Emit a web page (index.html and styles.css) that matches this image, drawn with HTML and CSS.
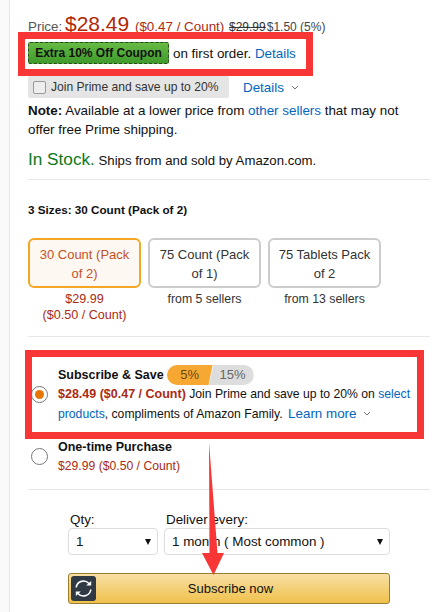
FILE: index.html
```html
<!DOCTYPE html>
<html lang="en">
<head>
    <meta charset="UTF-8">
    <meta name="viewport" content="width=device-width, initial-scale=1.0">
    <link rel="stylesheet" href="styles.css">
    <title>Subscribe &amp; Save</title>
</head>
<body>

    <div class="panel">
        <div class="price-block">
            <div class="price-row">
                <span class="muted">Price:</span>
                <span class="price-big">$28.49</span>
                <span class="red">($0.47 / Count)</span>
                <span class="strike">$29.99</span><span class="saving">$1.50 (5%)</span>
            </div>
            <div class="coupon-row">
                <span class="coupon">Extra 10% Off Coupon</span>
                <span>on first order. <a class="link">Details</a></span>
            </div>
            <div class="prime-row">
                <div class="prime-box">
                    <span class="checkbox"></span>
                    <span>Join Prime and save up to 20%</span>
                </div>
                <a class="link prime-details">Details</a>
                <svg class="chevron" width="8" height="5" viewBox="0 0 8 5"><path d="M1 1l3 3 3-3" fill="none" stroke="#777" stroke-width="1"/></svg>
            </div>
            <p class="note"><b>Note:</b> Available at a lower price from <a class="link">other sellers</a> that may not offer free Prime shipping.</p>
            <div class="stock-row"><span class="in-stock">In Stock.</span> Ships from and sold by Amazon.com.</div>
        </div>

        <div class="sizes-block">
            <div class="sizes-label">3 Sizes: 30 Count (Pack of 2)</div>
            <div class="sizes">
                <div class="size">
                    <div class="size-btn selected">30 Count (Pack of 2)</div>
                    <div class="size-note red">$29.99<br>($0.50 / Count)</div>
                </div>
                <div class="size">
                    <div class="size-btn">75 Count (Pack of 1)</div>
                    <div class="size-note">from 5 sellers</div>
                </div>
                <div class="size">
                    <div class="size-btn">75 Tablets Pack of 2</div>
                    <div class="size-note">from 13 sellers</div>
                </div>
            </div>
        </div>

        <div class="options-block">
            <div class="option option-sub">
                <span class="radio checked"></span>
                <div>
                    <div class="option-title">
                        <b>Subscribe &amp; Save</b>
                        <span class="pill"><span class="pill-on">5%</span><span class="pill-off">15%</span></span>
                    </div>
                    <div class="option-text"><b class="red">$28.49 ($0.47 / Count)</b> Join Prime and save up to 20% on <a class="link">select products</a>, compliments of Amazon Family. <a class="link learn-more">Learn more</a>
                        <svg class="chevron" width="8" height="5" viewBox="0 0 8 5"><path d="M1 1l3 3 3-3" fill="none" stroke="#777" stroke-width="1"/></svg>
                    </div>
                </div>
            </div>
            <div class="option option-once">
                <span class="radio"></span>
                <div>
                    <div class="option-title"><b>One-time Purchase</b></div>
                    <div class="red">$29.99 ($0.50 / Count)</div>
                </div>
            </div>
        </div>

        <div class="buy-block">
            <div class="selects">
                <div class="field">
                    <div class="field-label">Qty:</div>
                    <div class="select select-qty"><span>1</span><span class="caret"></span></div>
                </div>
                <div class="field">
                    <div class="field-label">Deliver every:</div>
                    <div class="select select-every"><span>1 month ( Most common )</span><span class="caret"></span></div>
                </div>
            </div>
            <div class="subscribe-btn">
                <span class="subscribe-icon">
                    <svg width="21" height="21" viewBox="0 0 21 21" fill="none" stroke="#fff" stroke-width="1.6">
                        <path d="M3.2 9.5A7.3 7.3 0 0 1 16 5.6"/>
                        <path d="M17.8 11.5A7.3 7.3 0 0 1 5 15.4"/>
                        <path d="M13.2 7.6h5V2.9z" fill="#fff" stroke="none"/>
                        <path d="M7.8 13.4h-5v4.7z" fill="#fff" stroke="none"/>
                    </svg>
                </span>
                Subscribe now
            </div>
        </div>
    </div>

    <div class="mark mark-coupon"></div>
    <div class="mark mark-subscribe"></div>
    <svg class="mark-arrow" width="30" height="140" viewBox="0 0 30 140">
        <path d="M10 3L10.500 114H3L14.500 136L25 114H18.500z" fill="#f93636"/>
    </svg>

</body>
</html>
```

FILE: styles.css
```css
body {
    font-family: 'Liberation Sans', Arial, sans-serif;
    font-size: 13.4px;
    line-height: 19px;
    margin: 0;
    padding: 0;
    background-color: #fafafa;
    color: #111;
    height: 612px;
    overflow: hidden;
    position: relative;
}

b {
    font-weight: bold;
}

.panel {
    margin-left: 9px;
    width: 421px;
    height: 612px;
    box-sizing: border-box;
    border-left: 1px solid #e7e7e7;
    background-color: #fff;
    padding: 0 0 0 18px;
    box-shadow: 6px 0 0 #fff;
}

.link {
    color: #0066c0;
}

.muted {
    color: #555;
}

.red {
    color: #ab2a12;
}

.strike {
    margin-left: 1px;
    color: #333;
    font-size: 12px;
    text-decoration: line-through;
}

.saving {
    margin-left: 1px;
    color: #444;
    font-size: 12px;
}

.chevron {
    margin-left: 7px;
    vertical-align: 2px;
}

.option-text .chevron {
    margin-left: 3px;
}

.price-block {
    height: 180px;
    padding-top: 10px;
    box-sizing: border-box;
    border-bottom: 1px solid #e7e7e7;
}

.price-row {
    height: 28px;
    line-height: 28px;
    white-space: nowrap;
}

.price-big {
    font-size: 21px;
    color: #b12704;
    margin: 0 2px 0 -1px;
}

.coupon-row {
    display: flex;
    align-items: center;
    gap: 4px;
    height: 22px;
    margin-top: 4px;
}

.coupon {
    width: 141px;
    height: 22px;
    box-sizing: border-box;
    border: 1px dashed #2c4a22;
    border-radius: 2px;
    background: linear-gradient(#66bb44, #3f9a2c);
    font-size: 12px;
    font-weight: bold;
    line-height: 20px;
    text-align: center;
}

.prime-row {
    display: flex;
    align-items: center;
    height: 22px;
    margin-top: 12px;
}

.prime-box {
    display: flex;
    align-items: center;
    gap: 5px;
    width: 201px;
    height: 22px;
    box-sizing: border-box;
    padding-left: 5px;
    background-color: #e5e5e5;
    border-radius: 2px;
    color: #333;
    font-size: 12.100px;
    white-space: nowrap;
}

.checkbox {
    width: 11px;
    height: 11px;
    border: 1px solid #999;
    border-radius: 2px;
    background-color: #eee;
}

.prime-details {
    margin-left: 14px;
}

.note {
    margin: 3px 0 0;
    width: 385px;
}

.stock-row {
    margin-top: 8px;
    line-height: 24px;
    font-size: 13.200px;
}

.in-stock {
    font-size: 17.200px;
    color: #0b7a20;
}

.sizes-block {
    height: 157px;
    box-sizing: border-box;
    padding-top: 21px;
    border-bottom: 1px solid #e7e7e7;
}

.sizes-label {
    font-weight: bold;
    font-size: 11.700px;
    line-height: 18px;
}

.sizes {
    display: flex;
    gap: 7px;
    margin-top: 19px;
}

.size {
    width: 113px;
    text-align: center;
}

.size-btn {
    height: 50px;
    box-sizing: border-box;
    border: 2px solid #ccc;
    border-radius: 6px;
    padding: 5px 6px;
    color: #333;
    font-size: 13px;
}

.size-btn.selected {
    border-color: #f5a623;
    background-color: #fef8f2;
    color: #c7511f;
}

.size-note {
    font-size: 12.300px;
    line-height: 16px;
    margin-top: 3px;
    color: #333;
}

.size-note.red {
    font-size: 12.600px;
    color: #ab2a12;
}

.options-block {
    height: 153px;
    box-sizing: border-box;
    border-bottom: 1px solid #e7e7e7;
    font-size: 12.200px;
}

.options-block b {
    font-size: 12.500px;
}

.option {
    display: flex;
    align-items: center;
    gap: 10px;
    margin-left: 3px;
}

.option-sub {
    padding-top: 28px;
}

.option-once {
    margin-top: 13px;
}

.radio {
    flex: none;
    width: 15px;
    height: 15px;
    border: 1px solid #777;
    border-radius: 50%;
    background-color: #fff;
    position: relative;
}

.radio.checked::after {
    content: "";
    position: absolute;
    left: 3px;
    top: 3px;
    width: 9px;
    height: 9px;
    border-radius: 50%;
    background-color: #e77600;
}

.option-title {
    display: flex;
    align-items: center;
    gap: 3px;
    height: 20px;
}

.option-text {
    width: 360px;
}

.learn-more {
    margin-left: 2px;
    font-size: 13.400px;
}

.pill {
    display: flex;
    width: 87px;
    height: 20px;
    border-radius: 10px;
    overflow: hidden;
    font-size: 13px;
    line-height: 20px;
    text-align: center;
}

.pill-on {
    width: 46px;
    background-color: #f7a833;
    color: #6b4a10;
    clip-path: polygon(0 0, 100% 0, 91% 100%, 0 100%);
}

.pill-off {
    flex: 1;
    margin-left: -4px;
    padding-left: 3px;
    background-color: #ddd;
    color: #666;
    clip-path: polygon(5px 0, 100% 0, 100% 100%, 0 100%);
}

.buy-block {
    padding-left: 40px;
}

.selects {
    display: flex;
    gap: 6px;
    margin-top: 21px;
}

.field-label {
    margin-left: 2px;
    height: 17px;
    line-height: 17px;
}

.select {
    display: flex;
    justify-content: space-between;
    align-items: center;
    height: 27px;
    box-sizing: border-box;
    border: 1px solid #ddd;
    border-radius: 4px;
    padding: 0 6px 0 7px;
    background-color: #fff;
}

.select-qty {
    width: 90px;
}

.select-every {
    width: 226px;
}

.caret {
    width: 0;
    height: 0;
    border-left: 3px solid transparent;
    border-right: 3px solid transparent;
    border-top: 6px solid #111;
}

.subscribe-btn {
    display: flex;
    align-items: center;
    justify-content: center;
    position: relative;
    width: 322px;
    height: 31px;
    box-sizing: border-box;
    margin-top: 18px;
    padding-left: 3px;
    border: 1px solid #9c7e31;
    border-radius: 3px;
    background: linear-gradient(#f7dfa5, #f0c14b);
    font-size: 13px;
}

.subscribe-icon {
    position: absolute;
    left: 2px;
    top: 2px;
    display: flex;
    align-items: center;
    justify-content: center;
    width: 25px;
    height: 25px;
    border-radius: 3px;
    background-color: #2f3a45;
}

.mark {
    position: absolute;
    box-sizing: border-box;
    border: 7px solid #f93636;
}

.mark-coupon {
    left: 18px;
    top: 32px;
    width: 295px;
    height: 44px;
}

.mark-subscribe {
    left: 25px;
    top: 350px;
    width: 399px;
    height: 89px;
}

.mark-arrow {
    position: absolute;
    left: 199px;
    top: 439px;
}
```
